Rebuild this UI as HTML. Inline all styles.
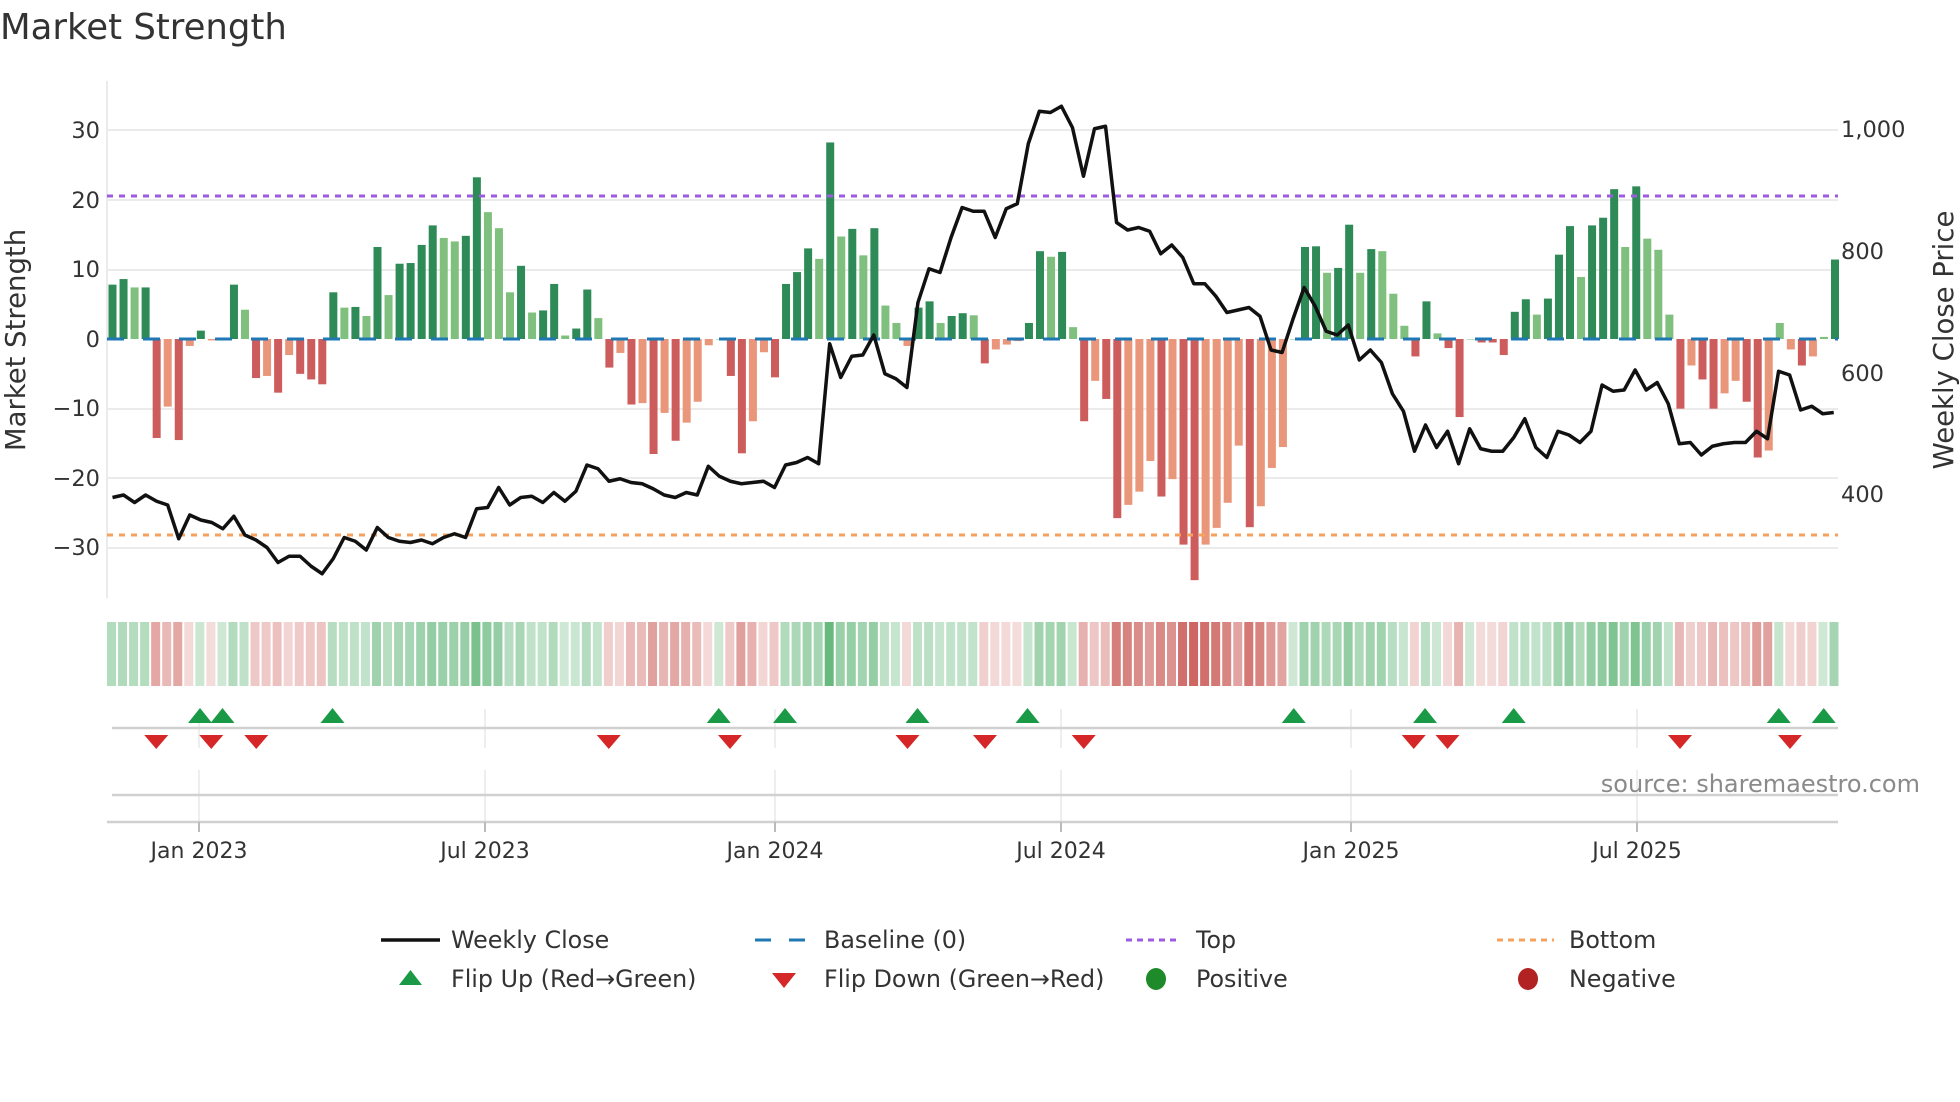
<!DOCTYPE html>
<html><head><meta charset="utf-8">
<style>
html,body{margin:0;padding:0;background:#fff;width:1960px;height:1102px;overflow:hidden}
svg{display:block}
text{font-family:"DejaVu Sans","Liberation Sans",sans-serif;fill:#333}
</style></head><body>
<svg id="s" width="1960" height="1102" viewBox="0 0 1960 1102" xmlns="http://www.w3.org/2000/svg">
<text x="0" y="39" font-size="35.5" fill="#333">Market Strength</text>
<g id="grid" stroke="#ebebeb" stroke-width="2">
<line x1="107" x2="1838" y1="130" y2="130"/><line x1="107" x2="1838" y1="200" y2="200"/>
<line x1="107" x2="1838" y1="270" y2="270"/><line x1="107" x2="1838" y1="409" y2="409"/>
<line x1="107" x2="1838" y1="478" y2="478"/><line x1="107" x2="1838" y1="548" y2="548"/>
<line x1="107" x2="107" y1="81" y2="598"/>
</g>
<g font-size="22.5" text-anchor="end">
<text x="100" y="138">30</text><text x="100" y="208">20</text><text x="100" y="277">10</text>
<text x="100" y="347">0</text><text x="100" y="416">−10</text><text x="100" y="486">−20</text><text x="100" y="555">−30</text>
</g>
<g font-size="22.5">
<text x="1841" y="137">1,000</text><text x="1841" y="259">800</text><text x="1841" y="381">600</text><text x="1841" y="502">400</text>
</g>
<text transform="translate(25,340) rotate(-90)" font-size="27.5" text-anchor="middle">Market Strength</text>
<text transform="translate(1953,340) rotate(-90)" font-size="27.5" text-anchor="middle">Weekly Close Price</text>
<g id="bars"></g>
<line x1="107" x2="1838" y1="339" y2="339" stroke="#1f77b4" stroke-width="3" stroke-dasharray="17 19"/>
<line x1="107" x2="1838" y1="196" y2="196" stroke="#9d5ce0" stroke-width="3" stroke-dasharray="6 6"/>
<line x1="107" x2="1838" y1="535" y2="535" stroke="#f4a25e" stroke-width="3" stroke-dasharray="6 6"/>
<polyline id="line" fill="none" stroke="#111" stroke-width="3.5" stroke-linejoin="round"/>
<g id="heat"></g>
<g stroke="#e8e8e8" stroke-width="1.5" id="vg"></g>
<line x1="112" x2="1838" y1="728" y2="728" stroke="#d0d0d0" stroke-width="2.5"/>
<line x1="112" x2="1838" y1="795" y2="795" stroke="#d0d0d0" stroke-width="2.5"/>
<line x1="107" x2="1838" y1="822" y2="822" stroke="#d0d0d0" stroke-width="2.5"/>
<g id="ticks" font-size="22" text-anchor="middle"></g>
<g id="flips"></g>
<text x="1920" y="792" font-size="24" text-anchor="end" style="fill:#8a8a8a">source: sharemaestro.com</text>
<g font-size="23.8">
<line x1="381" x2="440" y1="940" y2="940" stroke="#111" stroke-width="3.5"/>
<text x="451" y="948">Weekly Close</text>
<line x1="755" x2="806" y1="940" y2="940" stroke="#1f77b4" stroke-width="3" stroke-dasharray="16 18"/>
<text x="824" y="948">Baseline (0)</text>
<line x1="1126" x2="1181" y1="940" y2="940" stroke="#9d5ce0" stroke-width="3" stroke-dasharray="6 5"/>
<text x="1196" y="948">Top</text>
<line x1="1497" x2="1554" y1="940" y2="940" stroke="#f4a25e" stroke-width="3" stroke-dasharray="6 5"/>
<text x="1569" y="948">Bottom</text>
<polygon points="399,985 422,985 410.5,970" fill="#1a9a46"/>
<text x="451" y="987">Flip Up (Red→Green)</text>
<polygon points="772,973 796,973 784,988" fill="#d62728"/>
<text x="824" y="987">Flip Down (Green→Red)</text>
<ellipse cx="1156" cy="979" rx="10" ry="11" fill="#1f8a2a"/>
<text x="1196" y="987">Positive</text>
<ellipse cx="1528" cy="979" rx="10" ry="11" fill="#b22222"/>
<text x="1569" y="987">Negative</text>
</g>
</svg>
<script>
var V=[7.8,8.6,7.4,7.4,-14.2,-9.7,-14.5,-1,1.2,-0.2,0,7.8,4.2,-5.6,-5.3,-7.7,-2.3,-5,-5.8,-6.5,6.7,4.5,4.6,3.3,13.2,6.3,10.8,10.9,13.5,16.3,14.5,14,14.8,23.2,18.2,15.9,6.7,10.5,3.8,4.1,7.9,0.5,1.5,7.1,3,-4.1,-2,-9.4,-9.2,-16.5,-10.6,-14.6,-12,-9,-0.9,0,-5.3,-16.4,-11.8,-1.9,-5.5,7.9,9.6,13,11.5,28.2,14.7,15.8,12,15.9,4.8,2.3,-1,4.5,5.4,2.3,3.3,3.7,3.4,
-3.5,-1.5,-0.8,-0.3,2.3,12.6,11.8,12.5,1.7,-11.8,-6,-8.6,-25.7,-23.8,-21.9,-17.5,-22.6,-20.1,-29.5,-34.6,-29.5,-27.1,-23.5,-15.3,-27,-24,-18.5,-15.5,0,13.2,13.3,9.5,10.2,16.4,9.5,12.9,12.6,6.5,1.9,-2.5,5.4,0.8,-1.3,-11.2,0,-0.5,-0.5,-2.3,3.9,5.7,3.5,5.8,12.1,16.2,8.9,16.3,17.4,21.5,13.2,21.9,14.4,12.8,3.5,-10,-3.8,-5.8,-10,-7.8,-6,-9,-17,-16,2.3,-1.5,-3.8,-2.5,0.3,11.4];
var N=V.length,ns="http://www.w3.org/2000/svg";
function X(i){return 112.5+i*(1835-112.5)/(N-1)}
var bars=document.getElementById('bars'),heat=document.getElementById('heat');
function el(t,a,p){var e=document.createElementNS(ns,t);for(var k in a)e.setAttribute(k,a[k]);p.appendChild(e);return e}
for(var i=0;i<N;i++){var v=V[i],x=X(i),prev=i>0?V[i-1]:v;
 var strong=Math.abs(v)>=Math.abs(prev)||i==0;var c;
 if(v>=0)c=strong?'#2e8b57':'#80c07e';else c=strong?'#cd5c5c':'#e9967a';
 var y0=339,h=Math.abs(v)*6.97;
 el('rect',{x:x-4,y:v>=0?y0-h:y0,width:8,height:Math.max(h,0.5),fill:c},bars);
 var a=Math.min(Math.abs(v)/32,1);var col;
 if(v>=0){col='rgba(62,165,90,'+(0.25+0.6*a)+')'}else{col='rgba(200,85,80,'+(0.2+0.7*a)+')'}
 el('rect',{x:x-5.5,y:622,width:9,height:64,fill:col},heat);
}
var ly=[398,396,402,396,401,404,431,412,416,418,423,413,428,432,438,450,445,445,453,459,447,430,433,440,422,430,433,434,432,435,430,427,430,407,406,390,404,398,397,402,394,401,393,372,375,385,383,386,387,391,396,398,394,396,373,381,385,387,386,385,390,372,370,366,371,275,302,285,284,268,299,303,310,242,215,218,190,166,169,169,190,167,163,115,89,90,85,102,141,103,101,178,184,182,185,203,196,206,227,227,237,250,248,246,253,280,282,255,230,245,265,268,260,288,280,290,315,329,361,340,358,345,371,343,359,361,361,350,335,358,366,345,348,354,345,308,313,312,296,312,306,323,355,354,364,357,355,354,354,345,351,297,300,328,325,331,330];
var M=ly.length,pts=[];for(var j=0;j<M;j++){pts.push((90+j*(1467-90)/(M-1))*1.25+','+(ly[j]*1.25))}
document.getElementById('line').setAttribute('points',pts.join(' '));
var tk=[[199,'Jan 2023'],[485,'Jul 2023'],[775,'Jan 2024'],[1061,'Jul 2024'],[1351,'Jan 2025'],[1637,'Jul 2025']];
var vg=document.getElementById('vg'),tg=document.getElementById('ticks');
tk.forEach(function(t){el('line',{x1:t[0],x2:t[0],y1:709,y2:748},vg);el('line',{x1:t[0],x2:t[0],y1:770,y2:822},vg);
 el('line',{x1:t[0],x2:t[0],y1:822,y2:832,stroke:'#bbb','stroke-width':2},tg);
 var tx=el('text',{x:t[0],y:858},tg);tx.textContent=t[1];});
var up=[160,178,266,575,628,734,822,1035,1140,1211,1423,1459],dn=[125,169,205,487,584,726,788,867,1131,1158,1344,1432];
var fg=document.getElementById('flips');
up.forEach(function(u){var x=u*1.25;el('polygon',{points:(x-12)+',723 '+(x+12)+',723 '+x+',708',fill:'#1a9a46'},fg)});
dn.forEach(function(u){var x=u*1.25;el('polygon',{points:(x-12)+',735 '+(x+12)+',735 '+x+',749',fill:'#d62728'},fg)});
</script>
</body></html>
